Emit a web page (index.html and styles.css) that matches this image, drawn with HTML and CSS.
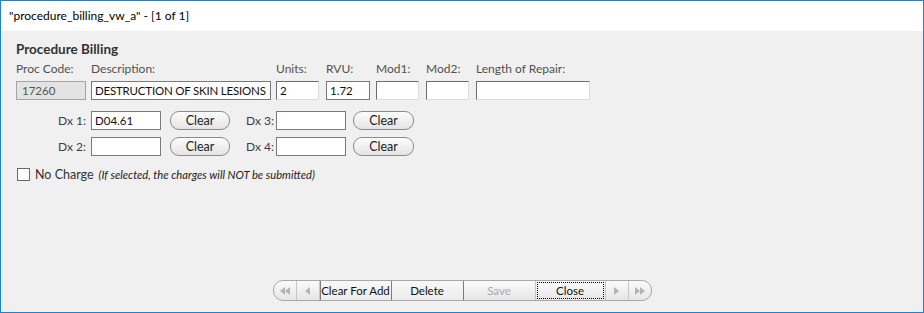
FILE: index.html
```html
<!DOCTYPE html>
<html lang="en">
<head>
    <meta charset="UTF-8">
    <title>procedure_billing_vw_a</title>
    <link rel="stylesheet" href="styles.css">
</head>
<body>
    <div class="window">
        <div class="title-bar">"procedure_billing_vw_a" - [1 of 1]</div>

        <div class="content">
            <h3 class="section-title">Procedure Billing</h3>

            <div class="proc-row">
                <div class="field w-proc">
                    <label>Proc Code:</label>
                    <input type="text" class="box readonly" value="17260" readonly>
                </div>
                <div class="field w-desc">
                    <label>Description:</label>
                    <input type="text" class="box" value="DESTRUCTION OF SKIN LESIONS">
                </div>
                <div class="field w-units">
                    <label>Units:</label>
                    <input type="text" class="box inset" value="2">
                </div>
                <div class="field w-rvu">
                    <label>RVU:</label>
                    <input type="text" class="box" value="1.72">
                </div>
                <div class="field w-mod">
                    <label>Mod1:</label>
                    <input type="text" class="box inset">
                </div>
                <div class="field w-mod">
                    <label>Mod2:</label>
                    <input type="text" class="box inset">
                </div>
                <div class="field w-length">
                    <label>Length of Repair:</label>
                    <input type="text" class="box inset">
                </div>
            </div>

            <div class="dx-grid">
                <span class="dx-label right">Dx 1:</span>
                <div><input type="text" class="box dx-box" value="D04.61"></div>
                <div><button class="pill">Clear</button></div>
                <span class="dx-label">Dx 3:</span>
                <div><input type="text" class="box dx-box"></div>
                <div><button class="pill wide">Clear</button></div>

                <span class="dx-label right">Dx 2:</span>
                <div><input type="text" class="box dx-box"></div>
                <div><button class="pill">Clear</button></div>
                <span class="dx-label">Dx 4:</span>
                <div><input type="text" class="box dx-box"></div>
                <div><button class="pill wide">Clear</button></div>
            </div>

            <div class="no-charge">
                <span class="check"></span>
                <span class="check-label">No Charge</span>
                <span class="note">(If selected, the charges will NOT be submitted)</span>
            </div>

            <div class="toolbar-wrap">
                <div class="toolbar">
                    <span class="nav first">
                        <svg width="10" height="8" viewBox="0 0 10 8"><path d="M5 0 L0 4 L5 8 Z M10 0 L5 4 L10 8 Z" fill="#b4b4b4"/></svg>
                    </span>
                    <span class="nav">
                        <svg width="5" height="8" viewBox="0 0 5 8"><path d="M5 0 L0 4 L5 8 Z" fill="#b4b4b4"/></svg>
                    </span>
                    <span class="tool boxed w-add">Clear For Add</span>
                    <span class="tool boxed w-del">Delete</span>
                    <span class="tool disabled w-save">Save</span>
                    <span class="tool focused w-close"><span class="focus-ring">Close</span></span>
                    <span class="nav">
                        <svg width="5" height="8" viewBox="0 0 5 8"><path d="M0 0 L5 4 L0 8 Z" fill="#b4b4b4"/></svg>
                    </span>
                    <span class="nav last">
                        <svg width="10" height="8" viewBox="0 0 10 8"><path d="M0 0 L5 4 L0 8 Z M5 0 L10 4 L5 8 Z" fill="#b4b4b4"/></svg>
                    </span>
                </div>
            </div>
        </div>
    </div>
</body>
</html>
```

FILE: styles.css
```css
body {
    margin: 0;
    font-family: Lato, "Open Sans", sans-serif;
    font-size: 12px;
    color: #333;
}
.window {
    width: 924px;
    height: 313px;
    box-sizing: border-box;
    border: 1px solid #1883d7;
    display: flex;
    flex-direction: column;
    background-color: #f0f0f0;
}
.title-bar {
    height: 30px;
    line-height: 30px;
    padding-left: 8px;
    background-color: #fff;
    color: #000;
    font-size: 12px;
}
.content {
    flex: 1;
    display: flex;
    flex-direction: column;
    padding: 10px 15px 0 15px;
}
.section-title {
    margin: 0;
    font-size: 13.5px;
    font-weight: bold;
    line-height: 16px;
    color: #333;
}
.proc-row {
    display: flex;
    margin-top: 4px;
}
.field {
    display: flex;
    flex-direction: column;
}
.field label {
    line-height: 16px;
    color: #505050;
    margin-bottom: 4px;
    white-space: nowrap;
}
.w-proc { width: 75px; }
.w-desc { width: 185px; }
.w-units { width: 50px; }
.w-rvu { width: 50px; }
.w-mod { width: 50px; }
.w-length { width: 114px; }
.box {
    box-sizing: border-box;
    height: 19px;
    margin: 0;
    padding: 0 3px;
    border: 1px solid #7a7a7a;
    background-color: #fff;
    font-family: Lato, "Open Sans", sans-serif;
    font-size: 11.5px;
    color: #111;
    outline: none;
}
.w-proc .box { width: 70px; }
.w-desc .box { width: 180px; letter-spacing: -0.2px; }
.w-units .box { width: 43px; }
.w-rvu .box { width: 44px; }
.w-mod .box { width: 43px; }
.w-length .box { width: 114px; }
.box.readonly {
    background-color: #e3e3e3;
    border-color: #a5a5a5;
    color: #555;
    padding-left: 5px;
}
.box.inset {
    border-color: #6e6e6e #dcdcdc #dcdcdc #6e6e6e;
}
.dx-grid {
    display: grid;
    grid-template-columns: 75px 79px 76px 30px 77px 61px;
    row-gap: 7px;
    margin-top: 11px;
    align-items: center;
}
.dx-label {
    color: #3c3c4a;
    line-height: 18px;
}
.dx-label.right {
    text-align: right;
    padding-right: 5px;
}
.dx-box {
    width: 70px;
}
.pill {
    box-sizing: border-box;
    width: 60px;
    height: 19px;
    padding: 0;
    border: 1px solid #8c8c8c;
    border-radius: 9px;
    background: linear-gradient(#fdfdfd, #e4e4e4);
    font-family: Lato, "Open Sans", sans-serif;
    font-size: 12.5px;
    color: #222;
}
.pill.wide {
    width: 61px;
}
.no-charge {
    display: flex;
    align-items: center;
    margin-top: 11px;
    padding-left: 1px;
}
.check {
    width: 11px;
    height: 11px;
    border: 1px solid #6a6a6a;
    background-color: #fff;
    margin-right: 5px;
}
.check-label {
    color: #333;
    font-size: 12.5px;
}
.note {
    margin-left: 5px;
    font-style: italic;
    font-size: 11.2px;
    color: #222;
}
.toolbar-wrap {
    margin-top: auto;
    margin-bottom: 11px;
    display: flex;
    justify-content: center;
}
.toolbar {
    display: flex;
    height: 21px;
    box-sizing: border-box;
    border: 1px solid #a8a8a8;
    border-radius: 10px;
    background: linear-gradient(#fbfbfb, #e6e6e6);
    overflow: hidden;
    font-size: 11.5px;
}
.nav {
    width: 22px;
    display: flex;
    align-items: center;
    justify-content: center;
    border-right: 1px solid #c6c6c6;
}
.nav.first {
    width: 22px;
}
.nav.last {
    width: 22px;
    border-right: none;
}
.tool {
    box-sizing: border-box;
    display: flex;
    align-items: center;
    justify-content: center;
    color: #111;
    white-space: nowrap;
}
.tool.boxed {
    border: 1px solid #7c7c7c;
    margin: -1px 0;
    height: 21px;
    background: linear-gradient(#f8f8f8, #ececec);
}
.tool.boxed + .tool.boxed {
    border-left: none;
}
.w-add { width: 72px; }
.w-del { width: 72px; }
.w-save { width: 72px; border-right: 1px solid #c6c6c6; }
.w-close { width: 70px; border-right: 1px solid #c6c6c6; }
.tool.disabled {
    color: #a8a8a8;
}
.tool.focused {
    padding: 1px 1px;
}
.focus-ring {
    box-sizing: border-box;
    width: 100%;
    height: 100%;
    display: flex;
    align-items: center;
    justify-content: center;
    border: 1px dotted #000;
}
```
